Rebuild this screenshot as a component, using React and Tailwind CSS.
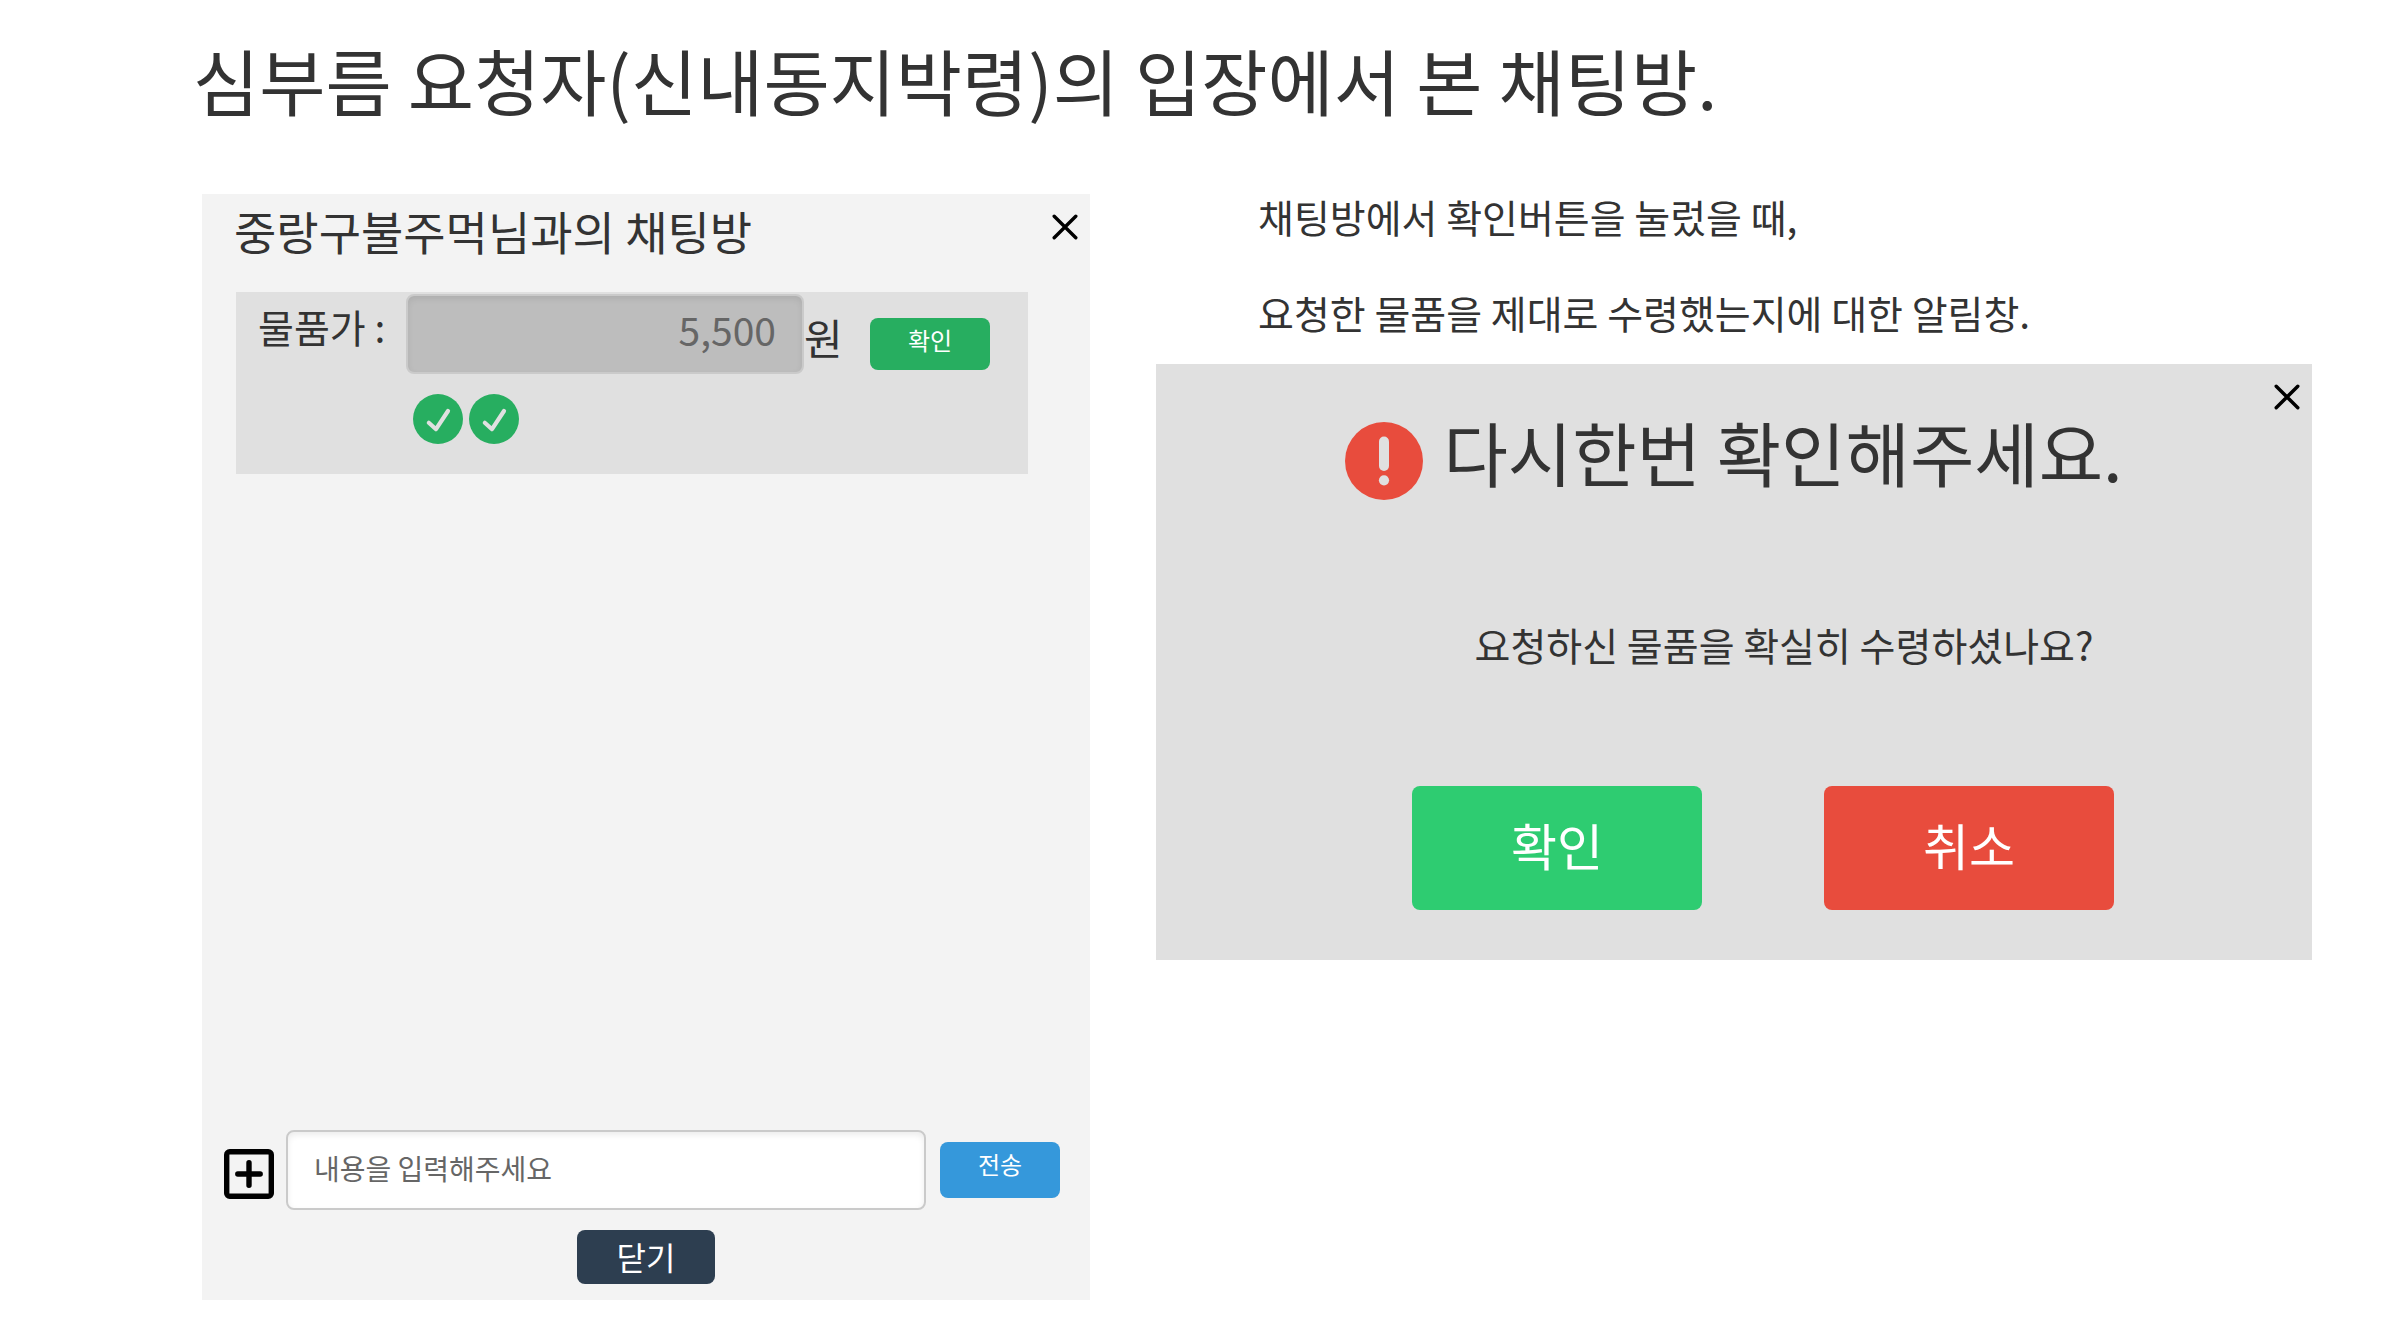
import React from "react";

function CloseButton({ label }) {
  return (
    <button type="button" aria-label={label} className="flex size-[50px] shrink-0 items-center justify-center text-black">
      <svg viewBox="0 0 26 26" className="size-[26px]" fill="none" stroke="currentColor" strokeWidth="3.4" strokeLinecap="round">
        <path d="M2.2 2.2 23.8 23.8M23.8 2.2 2.2 23.8" />
      </svg>
    </button>
  );
}

function CheckBadge() {
  return (
    <svg viewBox="0 0 50 50" className="size-[50px]" role="img" aria-label="확인됨">
      <circle cx="25" cy="25" r="25" fill="#27ae60" />
      <path d="M15.8 28.8 23 35.2 35 17" fill="none" stroke="#e0e0e0" strokeWidth="4.2" strokeLinecap="round" strokeLinejoin="round" />
    </svg>
  );
}

function AlertBadge() {
  return (
    <svg viewBox="0 0 78 78" className="size-[78px] shrink-0" aria-hidden="true">
      <circle cx="39" cy="39" r="39" fill="#e84c3d" />
      <rect x="34" y="14.5" width="10" height="34.5" rx="5" fill="#e0e0e0" />
      <circle cx="39" cy="58.3" r="5.1" fill="#e0e0e0" />
    </svg>
  );
}

function ChatRoom() {
  return (
    <section className="flex min-w-0 flex-col bg-[#f3f3f3]">
      <header className="flex items-start justify-between pt-2 pl-8">
        <h2 className="text-[46px] leading-14">중랑구불주먹님과의 채팅방</h2>
        <CloseButton label="채팅방 닫기" />
      </header>

      <div className="mt-[34px] mr-[62px] ml-[34px] bg-[#e0e0e0] pt-0.5 pb-[30px]">
        <div className="flex items-start pr-[38px] pl-[22px]">
          <label htmlFor="price" className="w-[148px] shrink-0 text-[39px] leading-16">물품가 :</label>
          <input
            id="price"
            readOnly
            value="5,500"
            className="h-20 min-w-0 flex-1 rounded-lg border-2 border-[#cacaca] bg-[#bdbdbd] px-[26px] pb-2.5 text-right text-[39px] text-[#666] shadow-[inset_0_3px_6px_rgba(0,0,0,0.08)] outline-none"
          />
          <span className="w-[66px] shrink-0 text-[42px] leading-[86px]">원</span>
          <button type="button" className="mt-6 h-[52px] w-[120px] shrink-0 rounded-lg bg-[#27ae60] pb-2 text-2xl text-white">확인</button>
        </div>
        <div className="mt-3.5 flex gap-1.5 pl-[177px]">
          <CheckBadge />
          <CheckBadge />
        </div>
      </div>

      <div className="min-h-[656px] flex-1" />

      <form className="flex items-start pr-[30px] pl-[22px]" onSubmit={(e) => e.preventDefault()}>
        <button type="button" aria-label="첨부 추가" className="mt-[19px] size-[50px] shrink-0">
          <svg viewBox="0 0 50 50" className="size-full" fill="none" stroke="#000" strokeWidth="5.4" strokeLinecap="round">
            <rect x="2.7" y="2.7" width="44.6" height="44.6" rx="3" />
            <path d="M25 13.8v22.4M13.8 25h22.4" />
          </svg>
        </button>
        <input
          type="text"
          aria-label="메시지"
          placeholder="내용을 입력해주세요"
          className="ml-3 h-20 min-w-0 flex-1 rounded-lg border-2 border-[#cacaca] bg-white px-[26px] pb-1 text-[28px] shadow-[inset_0_3px_6px_rgba(0,0,0,0.08)] outline-none placeholder:text-[#666]"
        />
        <button type="submit" className="mt-3 ml-3.5 h-14 w-[120px] shrink-0 rounded-lg bg-[#3598db] pb-3 text-2xl text-white">전송</button>
      </form>
      <div className="flex justify-center pt-5 pb-4">
        <button type="button" className="h-[54px] w-[138px] rounded-lg bg-[#2d3e50] pb-0.5 text-[32px] leading-10 text-white">닫기</button>
      </div>
    </section>
  );
}

function ConfirmDialog() {
  return (
    <section role="dialog" aria-labelledby="confirm-title" className="mt-7 bg-[#e0e0e0] pt-2 pb-[50px]">
      <div className="flex justify-end">
        <CloseButton label="알림창 닫기" />
      </div>
      <div className="flex items-start justify-center gap-5">
        <AlertBadge />
        <h2 id="confirm-title" className="text-[70px] leading-[60px]">다시한번 확인해주세요.</h2>
      </div>
      <p className="mt-[116px] pl-[100px] text-center text-[39px] leading-14">요청하신 물품을 확실히 수령하셨나요?</p>
      <div className="mt-[114px] flex justify-center gap-[122px] pl-[58px]">
        <button type="button" className="h-[124px] w-[290px] rounded-lg bg-[#2ecc71] pb-2 text-[50px] text-white">확인</button>
        <button type="button" className="h-[124px] w-[290px] rounded-lg bg-[#e84c3d] pb-2 text-[50px] text-white">취소</button>
      </div>
    </section>
  );
}

export default function App() {
  return (
    <main className="bg-white pt-[34px] pb-6 font-['Noto_Sans_CJK_KR',sans-serif] text-[#333]">
      <h1 className="pl-[193px] text-[72px] leading-[90px]">심부름 요청자(신내동지박령)의 입장에서 본 채팅방.</h1>
      <div className="mt-[70px] grid grid-cols-[888fr_1156fr] items-start gap-[66px] pr-[88px] pl-[202px]">
        <ChatRoom />
        <div className="min-w-0">
          <div className="flex flex-col gap-[52px] pl-[102px] text-[39px] leading-11">
            <p>채팅방에서 확인버튼을 눌렀을 때,</p>
            <p>요청한 물품을 제대로 수령했는지에 대한 알림창.</p>
          </div>
          <div className="pt-0.5">
            <ConfirmDialog />
          </div>
        </div>
      </div>
    </main>
  );
}
